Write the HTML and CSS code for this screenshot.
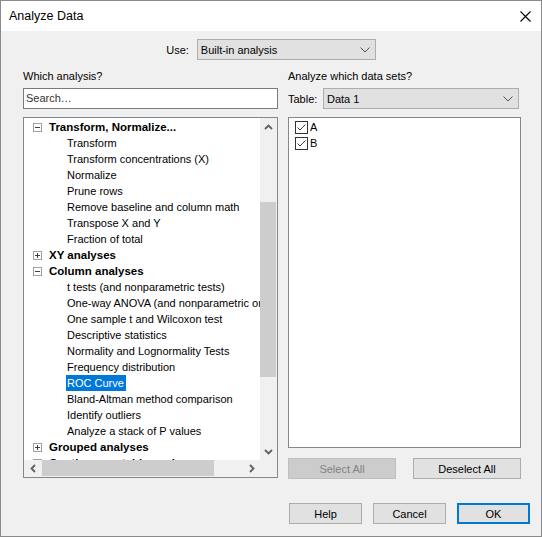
FILE: index.html
```html
<!DOCTYPE html>
<html>
<head>
<meta charset="utf-8">
<title>Analyze Data</title>
<link rel="stylesheet" href="styles.css">
</head>
<body>
<div class="window">
  <div class="titlebar">
    <span class="title">Analyze Data</span>
    <svg class="close" width="11" height="11" viewBox="0 0 11 11"><path d="M0.5 0.5 L10.5 10.5 M10.5 0.5 L0.5 10.5" stroke="#000" stroke-width="1.1" fill="none"/></svg>
  </div>
  <div class="body">
    <div class="use-row">
      <span class="lbl">Use:</span>
      <div class="combo combo-use">
        <span>Built-in analysis</span>
        <svg class="chev" width="10" height="6" viewBox="0 0 10 6"><polyline points="0.5,0.5 5,5 9.5,0.5" stroke="#505050" stroke-width="1" fill="none"/></svg>
      </div>
    </div>
    <div class="columns">
      <div class="col">
        <div class="lbl row-label">Which analysis?</div>
        <div class="search">Search…</div>
        <div class="tree">
          <div class="tree-content">
            <div class="trow group"><span class="exp"><span class="minus"></span></span>Transform, Normalize...</div>
            <div class="trow child">Transform</div>
            <div class="trow child">Transform concentrations (X)</div>
            <div class="trow child">Normalize</div>
            <div class="trow child">Prune rows</div>
            <div class="trow child">Remove baseline and column math</div>
            <div class="trow child">Transpose X and Y</div>
            <div class="trow child">Fraction of total</div>
            <div class="trow group"><span class="exp"><span class="minus"></span><span class="plus"></span></span>XY analyses</div>
            <div class="trow group"><span class="exp"><span class="minus"></span></span>Column analyses</div>
            <div class="trow child">t tests (and nonparametric tests)</div>
            <div class="trow child">One-way ANOVA (and nonparametric or mixed)</div>
            <div class="trow child">One sample t and Wilcoxon test</div>
            <div class="trow child">Descriptive statistics</div>
            <div class="trow child">Normality and Lognormality Tests</div>
            <div class="trow child">Frequency distribution</div>
            <div class="trow child"><span class="sel">ROC Curve</span></div>
            <div class="trow child">Bland-Altman method comparison</div>
            <div class="trow child">Identify outliers</div>
            <div class="trow child">Analyze a stack of P values</div>
            <div class="trow group"><span class="exp"><span class="minus"></span><span class="plus"></span></span>Grouped analyses</div>
            <div class="trow group"><span class="exp"><span class="minus"></span><span class="plus"></span></span>Contingency table analyses</div>
          </div>
          <div class="vscroll">
            <div class="arrow"><svg width="9" height="6" viewBox="0 0 9 6"><polyline points="1,5 4.5,1.5 8,5" stroke="#606060" stroke-width="1.8" fill="none"/></svg></div>
            <div class="vtrack"><div class="vthumb"></div></div>
            <div class="arrow"><svg width="9" height="6" viewBox="0 0 9 6"><polyline points="1,1 4.5,4.5 8,1" stroke="#606060" stroke-width="1.8" fill="none"/></svg></div>
          </div>
          <div class="hscroll">
            <div class="harrow"><svg width="6" height="9" viewBox="0 0 6 9"><polyline points="5,1 1.5,4.5 5,8" stroke="#606060" stroke-width="1.8" fill="none"/></svg></div>
            <div class="htrack"><div class="hthumb"></div></div>
            <div class="harrow"><svg width="6" height="9" viewBox="0 0 6 9"><polyline points="1,1 4.5,4.5 1,8" stroke="#606060" stroke-width="1.8" fill="none"/></svg></div>
          </div>
          <div class="corner"></div>
        </div>
      </div>
      <div class="col">
        <div class="lbl row-label">Analyze which data sets?</div>
        <div class="table-row">
          <span class="lbl table-lbl">Table:</span>
          <div class="combo combo-table">
            <span>Data 1</span>
            <svg class="chev" width="10" height="6" viewBox="0 0 10 6"><polyline points="0.5,0.5 5,5 9.5,0.5" stroke="#505050" stroke-width="1" fill="none"/></svg>
          </div>
        </div>
        <div class="list">
          <div class="lrow"><span class="cb"><svg width="11" height="11" viewBox="0 0 11 11"><polyline points="1.5,5.5 4,8 9.5,2.5" stroke="#404040" stroke-width="1" fill="none"/></svg></span><span>A</span></div>
          <div class="lrow"><span class="cb"><svg width="11" height="11" viewBox="0 0 11 11"><polyline points="1.5,5.5 4,8 9.5,2.5" stroke="#404040" stroke-width="1" fill="none"/></svg></span><span>B</span></div>
        </div>
        <div class="sel-buttons">
          <div class="btn disabled">Select All</div>
          <div class="btn">Deselect All</div>
        </div>
      </div>
    </div>
    <div class="footer">
      <div class="btn fbtn">Help</div>
      <div class="btn fbtn">Cancel</div>
      <div class="btn fbtn default">OK</div>
    </div>
  </div>
</div>
</body>
</html>
```

FILE: styles.css
```css
* { box-sizing: border-box; }
html, body { margin: 0; padding: 0; background: #ffffff; }
body {
  font-family: "Liberation Sans", Arial, sans-serif;
  font-size: 11px;
  color: #000;
}
.window {
  width: 542px;
  height: 537px;
  border: 1px solid #8a8a8a;
  display: flex;
  flex-direction: column;
  overflow: hidden;
}
.titlebar {
  height: 30px;
  flex: none;
  background: #ffffff;
  display: flex;
  align-items: center;
  padding-left: 8px;
}
.title { font-size: 12.5px; color: #000; }
.close { margin-left: auto; margin-right: 10px; }
.body {
  flex: 1;
  background: #f0f0f0;
  display: flex;
  flex-direction: column;
}
.use-row {
  margin-top: 8px;
  height: 21px;
  display: flex;
  justify-content: center;
  align-items: center;
  gap: 8px;
}
.lbl { line-height: 16px; white-space: nowrap; }
.combo {
  height: 21px;
  background: #e1e1e1;
  border: 1px solid #adadad;
  display: flex;
  align-items: center;
  padding-left: 3px;
  padding-right: 5px;
}
.combo .chev { margin-left: auto; }
.combo-use { width: 179px; }
.columns {
  margin-top: 8px;
  padding-left: 22px;
  display: grid;
  grid-template-columns: 255px 233px;
  column-gap: 10px;
}
.col { display: flex; flex-direction: column; }
.row-label { height: 16px; }
.search {
  margin-top: 4px;
  height: 21px;
  background: #fff;
  border: 1px solid #7a7a7a;
  padding-left: 2px;
  line-height: 19px;
  color: #333;
}
.tree {
  margin-top: 8px;
  height: 361px;
  border: 1px solid #828790;
  background: #fff;
  display: grid;
  grid-template-columns: 1fr 17px;
  grid-template-rows: 1fr 17px;
}
.tree-content {
  overflow: hidden;
  padding-top: 1px;
  white-space: nowrap;
}
.trow {
  height: 16px;
  line-height: 16px;
  display: flex;
  align-items: center;
}
.trow.child { padding-left: 43px; }
.trow.group {
  padding-left: 9px;
  font-weight: bold;
  font-size: 11.5px;
}
.exp {
  width: 9px;
  height: 9px;
  border: 1px solid #a0a0a0;
  background: #fff;
  margin-right: 7px;
  position: relative;
  flex: none;
}
.exp .minus {
  position: absolute;
  left: 1px; top: 3px;
  width: 5px; height: 1px;
  background: #404040;
}
.exp .plus {
  position: absolute;
  left: 3px; top: 1px;
  width: 1px; height: 5px;
  background: #404040;
}
.sel {
  background: #0078d7;
  color: #fff;
  padding: 0 2px 0 1px;
  margin-left: -1px;
}
.vscroll {
  background: #f0f0f0;
  display: flex;
  flex-direction: column;
}
.arrow, .harrow {
  width: 17px;
  height: 17px;
  flex: none;
  display: flex;
  align-items: center;
  justify-content: center;
}
.vtrack { flex: 1; padding-top: 67px; }
.vthumb { height: 175px; background: #cdcdcd; margin-right: 1px; }
.hscroll {
  background: #f0f0f0;
  display: flex;
}
.htrack { flex: 1; padding-left: 1px; }
.hthumb { width: 172px; height: 16px; background: #cdcdcd; }
.corner { background: #f0f0f0; }
.table-row {
  margin-top: 4px;
  height: 21px;
  display: flex;
  align-items: center;
}
.table-lbl { width: 35px; }
.combo-table { width: 196px; }
.list {
  margin-top: 8px;
  height: 331px;
  background: #fff;
  border: 1px solid #828790;
  padding-top: 1px;
  padding-left: 6px;
}
.lrow {
  height: 16px;
  display: flex;
  align-items: center;
  gap: 2px;
}
.cb {
  width: 13px;
  height: 13px;
  border: 1px solid #333;
  background: #fff;
  display: flex;
  align-items: center;
  justify-content: center;
}
.sel-buttons {
  margin-top: 10px;
  display: flex;
  justify-content: space-between;
}
.btn {
  height: 21px;
  width: 108px;
  background: #e1e1e1;
  border: 1px solid #adadad;
  display: flex;
  align-items: center;
  justify-content: center;
}
.btn.disabled {
  background: #cccccc;
  border-color: #bfbfbf;
  color: #838383;
}
.footer {
  margin-top: 24px;
  display: flex;
  justify-content: flex-end;
  gap: 11px;
  padding-right: 11px;
}
.fbtn { width: 73px; }
.fbtn.default { border: 2px solid #0078d7; }
```
